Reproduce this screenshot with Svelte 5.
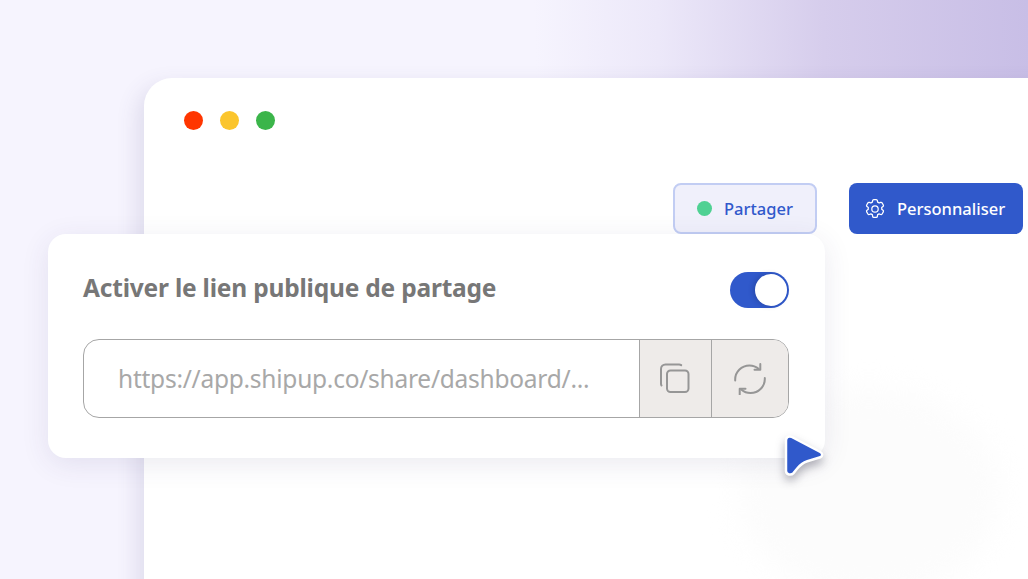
<script>
	let enabled = $state(true);
</script>

<div class="stage">
	<div class="window">
		<div class="dots">
			<span class="dot red"></span>
			<span class="dot yellow"></span>
			<span class="dot green"></span>
		</div>
		<div class="actions">
			<button class="share">
				<span class="status"></span>
				Partager
			</button>
			<button class="customize">
				<svg width="24" height="24" viewBox="0 0 24 24" fill="none" stroke="currentColor" stroke-width="1.25" stroke-linecap="round" stroke-linejoin="round">
					<path d="M9.6 3.6c.1-.6.6-1 1.2-1h2.4c.6 0 1.1.4 1.2 1l.2 1.6c.5.2 1 .5 1.5.8l1.5-.6c.6-.2 1.2 0 1.5.5l1.2 2.1c.3.5.2 1.2-.3 1.6l-1.3 1c.1.6.1 1.100 0 1.700l1.300 1c.5.4.6 1.100.3 1.600l-1.200 2.100c-.3.5-.9.7-1.500.5l-1.500-.6c-.5.3-1 .6-1.500.8l-.2 1.600c-.1.6-.6 1-1.200 1h-2.400c-.6 0-1.100-.4-1.200-1l-.2-1.600c-.5-.2-1-.5-1.500-.8l-1.500.6c-.6.2-1.200 0-1.500-.5l-1.200-2.100c-.3-.5-.2-1.200.3-1.600l1.300-1c-.1-.6-.1-1.100 0-1.700l-1.300-1c-.5-.4-.6-1.100-.3-1.600l1.200-2.100c.3-.5.9-.7 1.500-.5l1.500.6c.5-.3 1-.6 1.500-.8z" />
					<circle cx="12" cy="12" r="3.2" />
				</svg>
				Personnaliser
			</button>
		</div>
	</div>

	<div class="card">
		<div class="card-head">
			<h2>Activer le lien publique de partage</h2>
			<button class="toggle" class:on={enabled} aria-label="Activer" onclick={() => (enabled = !enabled)}>
				<span class="knob"></span>
			</button>
		</div>
		<div class="link">
			<span class="url">https://app.shipup.co/share/dashboard/...</span>
			<button class="tool" aria-label="Copier">
				<svg width="32" height="32" viewBox="0 0 32 32" fill="none" stroke="currentColor" stroke-width="2" stroke-linecap="round" stroke-linejoin="round">
					<rect x="7" y="7.5" width="21.5" height="21.5" rx="3.5" />
					<path d="M1.5 22.5c-.3-.5-.5-1-.5-1.700V6c0-2.600 2-4.500 4.500-4.500h13.700c.8 0 1.400.2 2 .6" />
				</svg>
			</button>
			<button class="tool" aria-label="Regenerer">
				<svg width="32" height="32" viewBox="0 0 32 32" fill="none" stroke="currentColor" stroke-width="2" stroke-linecap="round" stroke-linejoin="round">
					<path d="M1.200 17.500C.7 9 7.600 2.500 15.500 2.500c3.500 0 6.500 1.100 9 3.300" />
					<path d="M26.300 1v5.800h-5.800" />
					<path d="M30.800 15c.5 8.500-6.400 15-14.300 15-3.500 0-6.500-1.100-9-3.300" />
					<path d="M5.700 31.500v-5.800h5.800" />
				</svg>
			</button>
		</div>
	</div>

	<svg class="cursor" width="46" height="52" viewBox="0 0 46 52">
		<path d="M5 8.500c0-3.500 3-5 5.800-3.500l28.500 15c2.500 1.400 2.500 4.300 0 5.300l-13 4c-4 1.300-7.500 4-10.300 7.500l-3.500 4.300c-2.400 2.700-7.500 1.500-7.500-2z" fill="#3059cb" stroke="#fff" stroke-width="2.500" stroke-linejoin="round" />
	</svg>
</div>

<style>
	:global(body) {
		margin: 0;
	}

	.stage {
		position: relative;
		width: 1028px;
		height: 579px;
		overflow: hidden;
		box-sizing: border-box;
		padding: 78px 0 0 144px;
		font-family: "Noto Sans", sans-serif;
		background:
			linear-gradient(268deg, #c8bee6 0%, #d6cdec 20%, #ece8f9 36%, rgba(246, 244, 254, 0) 48%) top / 100% 78px no-repeat,
			#f6f4fe;
	}

	.window {
		height: 560px;
		margin-right: -60px;
		background: #fff;
		border-radius: 28px 0 0 0;
		box-shadow: -6px 8px 22px rgba(80, 70, 130, 0.14);
		padding: 33px 0 0 40px;
		position: relative;
		overflow: hidden;
	}

	.window::after {
		content: "";
		position: absolute;
		left: 595px;
		top: 310px;
		width: 260px;
		height: 210px;
		border-radius: 50%;
		background: #fcfcfc;
		filter: blur(14px);
	}

	.dots {
		display: flex;
		gap: 17px;
	}

	.dot {
		width: 19px;
		height: 19px;
		border-radius: 50%;
	}

	.red { background: #ff3600; }
	.yellow { background: #fbc52d; }
	.green { background: #3bb54a; }

	.actions {
		display: flex;
		align-items: stretch;
		gap: 32px;
		margin: 53px 0 0 489px;
		height: 51px;
	}

	.actions button {
		display: flex;
		align-items: center;
		box-sizing: border-box;
		height: 100%;
		border-radius: 8px;
		font-family: inherit;
		font-size: 16.500px;
		font-weight: 500;
		padding: 0;
	}

	.share {
		width: 144px;
		gap: 12px;
		padding-left: 22px !important;
		background: #f0f0fb;
		border: 2px solid #c2cdf3;
		color: #3059cb;
	}

	.status {
		width: 15px;
		height: 15px;
		border-radius: 50%;
		background: #4fd193;
	}

	.customize {
		width: 174px;
		gap: 10px;
		padding-left: 14px !important;
		background: #3059cb;
		border: none;
		color: #fff;
	}

	.card {
		position: absolute;
		left: 48px;
		top: 234px;
		width: 777px;
		height: 224px;
		box-sizing: border-box;
		padding: 36px 36px 0 35px;
		background: #fff;
		border-radius: 18px;
		box-shadow: 0 6px 28px rgba(60, 50, 110, 0.1);
		z-index: 1;
	}

	.card-head {
		display: flex;
		justify-content: space-between;
		align-items: center;
		height: 38px;
	}

	h2 {
		margin: -4px 0 0;
		font-size: 24.500px;
		font-weight: 700;
		letter-spacing: -0.2px;
		color: #777;
	}

	.toggle {
		width: 59px;
		height: 36px;
		margin-top: 1px;
		border: none;
		border-radius: 18px;
		padding: 2px;
		background: #3059cb;
		display: flex;
		justify-content: flex-end;
		box-sizing: border-box;
	}

	.knob {
		width: 32px;
		height: 32px;
		border-radius: 50%;
		background: #fff;
		box-shadow: -2px 0 5px rgba(20, 30, 80, 0.25);
	}

	.link {
		display: flex;
		margin-top: 31px;
		height: 79px;
		box-sizing: border-box;
		border: 1px solid #a6a6a6;
		border-radius: 16px;
		overflow: hidden;
	}

	.url {
		flex: 1;
		display: flex;
		align-items: center;
		padding-left: 34px;
		font-size: 24.500px;
		letter-spacing: -0.25px;
		color: #a8a8a8;
		white-space: nowrap;
	}

	.tool {
		width: 72px;
		padding: 0;
		border: none;
		border-left: 1px solid #a6a6a6;
		background: #eeebe9;
		color: #969696;
		display: flex;
		align-items: center;
		justify-content: center;
	}

	.tool:last-child {
		width: 77px;
	}

	.cursor {
		position: absolute;
		left: 781px;
		top: 432px;
		z-index: 2;
		filter: drop-shadow(0 5px 5px rgba(40, 40, 60, 0.35));
	}
</style>
